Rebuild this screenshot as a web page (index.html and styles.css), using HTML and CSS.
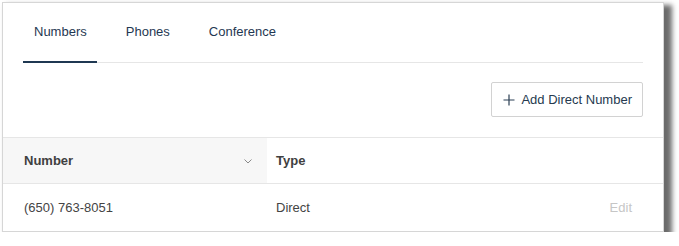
FILE: index.html
```html
<!DOCTYPE html>
<html>
<head>
<meta charset="utf-8">
<link rel="stylesheet" href="styles.css">
</head>
<body>
<div class="panel">
  <div class="tabs-wrap">
    <nav class="tabs">
      <span class="tab active">Numbers</span>
      <span class="tab tab-phones">Phones</span>
      <span class="tab tab-conf">Conference</span>
    </nav>
  </div>
  <div class="toolbar">
    <button class="btn">
      <svg class="plus" width="12" height="12" viewBox="0 0 12 12"><path d="M6 0.5V11.5M0.5 6H11.5" stroke="#2b3f54" stroke-width="1.2" fill="none"/></svg>
      <span>Add Direct Number</span>
    </button>
  </div>
  <table class="grid">
    <thead>
      <tr>
        <th class="col-num sorted"><div class="th-inner"><span>Number</span><svg class="chev" width="8" height="5" viewBox="0 0 8 5"><polyline points="0.5,0.5 4,4 7.5,0.5" stroke="#8a8a8a" stroke-width="1" fill="none"/></svg></div></th>
        <th class="col-type">Type</th>
        <th class="col-act"></th>
      </tr>
    </thead>
    <tbody>
      <tr>
        <td class="col-num">(650) 763-8051</td>
        <td class="col-type">Direct</td>
        <td class="col-act"><span class="edit">Edit</span></td>
      </tr>
    </tbody>
  </table>
</div>
</body>
</html>
```

FILE: styles.css
```css
html, body {
  margin: 0;
  padding: 0;
  background: #ffffff;
}
body {
  font-family: "Liberation Sans", Arial, sans-serif;
  font-size: 13px;
  color: #444;
}
.panel {
  margin: 2px 0 0 2px;
  width: 660px;
  height: 228px;
  border: 1px solid #d6d6d6;
  background: #fff;
  box-shadow: 6px 5px 5px 2px rgba(0, 0, 0, 0.58);
  display: flex;
  flex-direction: column;
}
.tabs-wrap {
  padding: 0 20px;
}
.tabs {
  display: flex;
  border-bottom: 1px solid #e6e6e6;
  height: 59px;
}
.tab {
  padding: 21px 10px 22px 11px;
  line-height: 15px;
  color: #1f3852;
  border-bottom: 2px solid transparent;
  margin-bottom: -1px;
  height: 15px;
}
.tab.active {
  border-bottom-color: #1f3852;
}
.tab-phones {
  margin-left: 18px;
}
.tab-conf {
  margin-left: 18px;
}
.toolbar {
  display: flex;
  justify-content: flex-end;
  padding: 19px 20px 20px;
}
.btn {
  height: 35px;
  box-sizing: border-box;
  display: flex;
  align-items: center;
  gap: 6px;
  padding: 0 10px 0 11px;
  border: 1px solid #d2d2d2;
  border-radius: 2px;
  background: #fff;
  font-family: "Liberation Sans", Arial, sans-serif;
  font-size: 13px;
  color: #263a4f;
}
.plus {
  display: block;
}
.grid {
  width: 100%;
  border-collapse: collapse;
  table-layout: fixed;
}
.grid th, .grid td {
  text-align: left;
  padding: 0;
}
.grid th {
  height: 45px;
  font-weight: bold;
  color: #404040;
  border-top: 1px solid #e6e6e6;
  border-bottom: 1px solid #e6e6e6;
}
.grid td {
  height: 46px;
  color: #444;
}
.col-num {
  width: 243px;
  padding-left: 21px !important;
}
.th-inner {
  display: flex;
  align-items: center;
  justify-content: space-between;
  padding-right: 15px;
}
.chev {
  display: block;
  margin-top: 1px;
}
.sorted {
  background: #f7f7f7;
}
.col-type {
  width: auto;
  padding-left: 9px !important;
}
.col-act {
  width: 120px;
  text-align: right !important;
  padding-right: 31px !important;
}
.edit {
  color: #c6c6c6;
}
```
